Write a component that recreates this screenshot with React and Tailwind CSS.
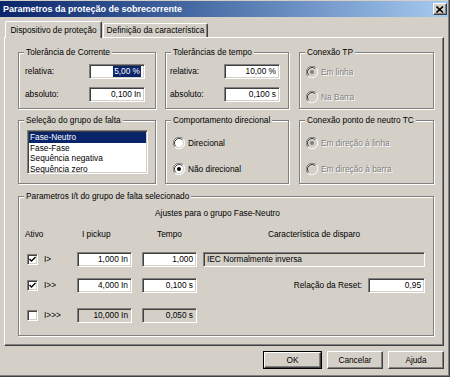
import React from "react";

const SUNKEN =
  "border border-t-[#808080] border-l-[#808080] border-r-white border-b-white shadow-[inset_1px_1px_0_#404040,inset_-1px_-1px_0_#d4d0c8]";
const RAISED =
  "border border-t-white border-l-white border-r-[#404040] border-b-[#404040] shadow-[inset_-1px_-1px_0_#808080,inset_1px_1px_0_#d4d0c8]";

function Group({ title, className, children }) {
  return (
    <div
      className={
        "relative border border-[#808080] shadow-[inset_1px_1px_0_#fff,1px_1px_0_#fff] " +
        className
      }
    >
      <span className="absolute -top-[6px] left-[5px] bg-[#d4d0c8] px-[2px] leading-[11px] whitespace-nowrap">
        {title}
      </span>
      {children}
    </div>
  );
}

function Edit({ value, w, selected, disabled }) {
  return (
    <div
      className={
        SUNKEN +
        " h-[15px] flex items-center justify-end pr-[3px] whitespace-nowrap " +
        (disabled ? "bg-[#d4d0c8]" : "bg-white") +
        " " +
        w
      }
    >
      {selected ? (
        <span className="bg-[#0a246a] text-white px-[1px]">{value}</span>
      ) : (
        value
      )}
    </div>
  );
}

function Radio({ label, checked, disabled }) {
  const dim = disabled ? "#808080" : "#000";
  return (
    <div className="flex items-center h-[12px] gap-[3px]">
      <svg width="12" height="12" viewBox="0 0 12 12">
        <circle cx="6" cy="6" r="5" fill={disabled ? "#d4d0c8" : "#fff"} />
        <path d="M1.76 10.24 A6 6 0 0 1 10.24 1.76" stroke="#808080" fill="none" />
        <path d="M10.24 1.76 A6 6 0 0 1 1.76 10.24" stroke="#fff" fill="none" />
        <path d="M2.82 9.18 A4.5 4.5 0 0 1 9.18 2.82" stroke="#404040" fill="none" />
        <path d="M9.18 2.82 A4.5 4.5 0 0 1 2.82 9.18" stroke="#d4d0c8" fill="none" />
        {checked && <circle cx="6" cy="6" r="2" fill={dim} />}
      </svg>
      <span
        className={
          disabled ? "text-[#808080] [text-shadow:1px_1px_0_#fff]" : "text-black"
        }
      >
        {label}
      </span>
    </div>
  );
}

function Check({ checked }) {
  return (
    <div className={SUNKEN + " w-[11px] h-[11px] bg-white flex items-center justify-center"}>
      {checked && (
        <svg width="7" height="7" viewBox="0 0 7 7">
          <path d="M0.5 3 L2.5 5 L6.5 1" stroke="#000" strokeWidth="1.4" fill="none" />
        </svg>
      )}
    </div>
  );
}

function Button({ label, isDefault }) {
  return (
    <div
      className={
        "h-[18px] " +
        (isDefault ? "w-[59px] border border-black" : "w-[56px]")
      }
    >
      <div className={RAISED + " h-full w-full flex items-center justify-center"}>
        {label}
      </div>
    </div>
  );
}

export default function App() {
  return (
    <div className="w-[450px] h-[377px] bg-[#d4d0c8] border-r border-b border-[#404040] shadow-[inset_-1px_-1px_0_#808080] font-['Liberation_Sans',Arial,sans-serif] text-[8.3px] leading-[11px] text-black overflow-hidden">
      {/* title bar */}
      <div className="mt-[1px] mr-[1px] h-[16px] bg-gradient-to-r from-[#0a246a] to-[#a6caf0] flex items-center justify-between pl-[3px] pr-[1px]">
        <span className="text-white font-bold text-[9px]">
          Parametros da proteção de sobrecorrente
        </span>
        <div className={RAISED + " w-[14px] h-[12px] bg-[#d4d0c8] flex items-center justify-center"}>
          <svg width="8" height="7" viewBox="0 0 8 7">
            <path d="M0.5 0.5 L7 6.5 M7 0.5 L0.5 6.5" stroke="#000" strokeWidth="1.6" />
          </svg>
        </div>
      </div>

      <div className="pl-[4px]">
        {/* tabs */}
        <div className="mt-[4px] h-[16px] flex items-end pl-[1px]">
          <div className="relative z-10 -mb-[1px] h-[17px] w-[97px] bg-[#d4d0c8] border-t border-l border-white border-r border-r-[#404040] shadow-[inset_-1px_0_0_#808080] rounded-t-[2px] flex items-center justify-center">
            Dispositivo de proteção
          </div>
          <div className="h-[14px] w-[105px] ml-[1px] border-t border-l border-white border-r border-r-[#404040] shadow-[inset_-1px_0_0_#808080] rounded-t-[2px] flex items-center justify-center">
            Definição da característica
          </div>
        </div>

        {/* tab panel */}
        <div className="w-[440px] border border-t-white border-l-white border-r-[#404040] border-b-[#404040] shadow-[inset_-1px_-1px_0_#808080] pt-[14px] pb-[9px] pl-[13px]">
          <div className="flex">
            <Group title="Tolerância de Corrente" className="w-[138px] h-[57px] pt-[11px] pl-[6px]">
              <div className="flex items-center h-[15px]">
                <span className="w-[64px]">relativa:</span>
                <Edit value="5,00 %" w="w-[56px]" selected />
              </div>
              <div className="flex items-center h-[15px] mt-[8px]">
                <span className="w-[64px]">absoluto:</span>
                <Edit value="0,100 In" w="w-[56px]" />
              </div>
            </Group>
            <Group title="Tolerâncias de tempo" className="ml-[9px] w-[124px] h-[57px] pt-[11px] pl-[4px]">
              <div className="flex items-center h-[15px]">
                <span className="w-[54px]">relativa:</span>
                <Edit value="10,00 %" w="w-[56px]" />
              </div>
              <div className="flex items-center h-[15px] mt-[8px]">
                <span className="w-[54px]">absoluto:</span>
                <Edit value="0,100 s" w="w-[56px]" />
              </div>
            </Group>
            <Group title="Conexão TP" className="ml-[10px] w-[135px] h-[57px] pt-[13px] pl-[6px]">
              <Radio label="Em linha" checked disabled />
              <div className="mt-[13px]">
                <Radio label="Na Barra" disabled />
              </div>
            </Group>
          </div>

          <div className="flex mt-[11px]">
            <Group title="Seleção do grupo de falta" className="w-[138px] h-[64px] pt-[9px] pl-[8px]">
              <div className={SUNKEN + " w-[121px] h-[44px] bg-white pl-[1px] pt-[1px] leading-[10.5px]"}>
                <div className="bg-[#0a246a] text-white w-[117px] pl-[1px]">
                  Fase-Neutro
                </div>
                <div className="pl-[1px]">Fase-Fase</div>
                <div className="pl-[1px]">Sequência negativa</div>
                <div className="pl-[1px]">Sequência zero</div>
              </div>
            </Group>
            <Group title="Comportamento direcional" className="ml-[9px] w-[124px] h-[64px] pt-[16px] pl-[7px]">
              <Radio label="Direcional" />
              <div className="mt-[14px]">
                <Radio label="Não direcional" checked />
              </div>
            </Group>
            <Group title="Conexão ponto de neutro TC" className="ml-[10px] w-[135px] h-[64px] pt-[16px] pl-[6px]">
              <Radio label="Em direção à linha" checked disabled />
              <div className="mt-[14px]">
                <Radio label="Em direção à barra" disabled />
              </div>
            </Group>
          </div>

          <Group
            title="Parametros I/t do grupo de falta selecionado"
            className="mt-[12px] w-[416px] h-[140px] pt-[11px]"
          >
            <div className="pl-[136px] whitespace-nowrap">
              Ajustes para o grupo Fase-Neutro
            </div>
            <div className="flex mt-[10px] pl-[6px] whitespace-nowrap">
              <span className="w-[57px]">Ativo</span>
              <span className="w-[75px]">I pickup</span>
              <span className="w-[111px]">Tempo</span>
              <span>Característica de disparo</span>
            </div>

            <div className="flex items-center mt-[12px] pl-[8px] h-[15px]">
              <div className="w-[17px]"><Check checked /></div>
              <span className="w-[33px]">I&gt;</span>
              <Edit value="1,000 In" w="w-[55px]" />
              <div className="w-[10px]" />
              <Edit value="1,000" w="w-[55px]" />
              <div className="w-[6px]" />
              <div className={SUNKEN + " w-[222px] h-[15px] bg-[#d4d0c8] flex items-center pl-[3px]"}>
                IEC Normalmente inversa
              </div>
            </div>

            <div className="flex items-center mt-[11px] pl-[8px] h-[15px]">
              <div className="w-[17px]"><Check checked /></div>
              <span className="w-[33px]">I&gt;&gt;</span>
              <Edit value="4,000 In" w="w-[55px]" />
              <div className="w-[10px]" />
              <Edit value="0,100 s" w="w-[55px]" />
              <span className="w-[171px] text-right pr-[6px]">Relação da Reset:</span>
              <Edit value="0,95" w="w-[57px]" />
            </div>

            <div className="flex items-center mt-[15px] pl-[8px] h-[15px]">
              <div className="w-[17px]"><Check /></div>
              <span className="w-[33px]">I&gt;&gt;&gt;</span>
              <Edit value="10,000 In" w="w-[55px]" disabled />
              <div className="w-[10px]" />
              <Edit value="0,050 s" w="w-[55px]" disabled />
            </div>
          </Group>
        </div>

        {/* buttons */}
        <div className="w-[440px] mt-[5px] flex justify-end gap-[5px]">
          <Button label="OK" isDefault />
          <Button label="Cancelar" />
          <Button label="Ajuda" />
        </div>
      </div>
    </div>
  );
}
